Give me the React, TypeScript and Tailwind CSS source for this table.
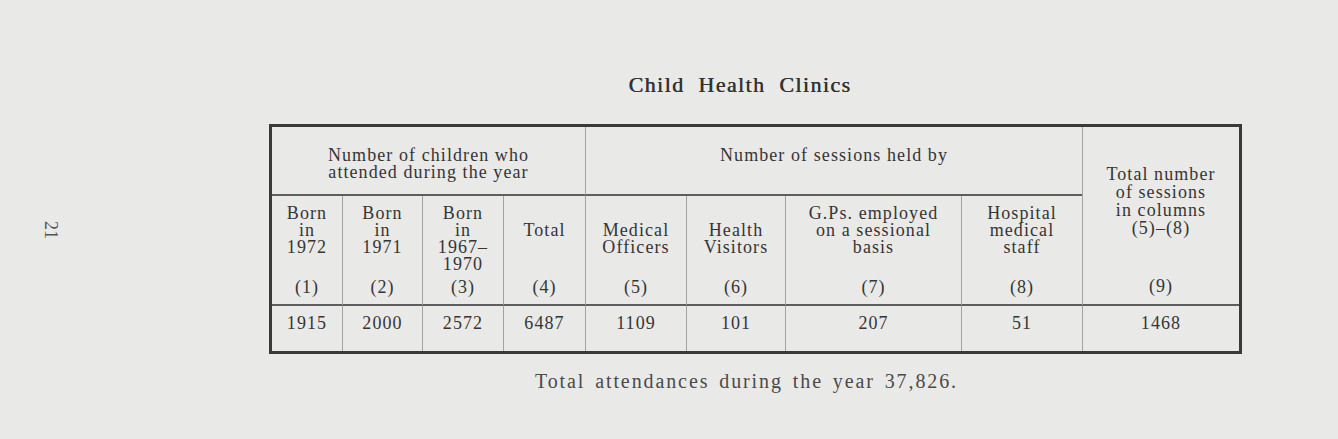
import React from "react";

const serif = { fontFamily: '"Liberation Serif", "Times New Roman", serif' };

function HeadCell({
  lines,
  label,
  offset = false,
  left = true,
}: {
  lines: string[];
  label: string;
  offset?: boolean;
  left?: boolean;
}) {
  return (
    <div
      className={`flex flex-col items-center pt-[9px] border-b-2 border-b-[#5e5e5e] ${
        left ? "border-l border-l-[#a3a3a1]" : ""
      }`}
    >
      <div className={`h-[74px] flex flex-col items-center ${offset ? "pt-[17px]" : ""}`}>
        {lines.map((l, i) => (
          <div key={i} className="whitespace-nowrap">
            {l}
          </div>
        ))}
      </div>
      <div>{label}</div>
    </div>
  );
}

function DataCell({ v, left = true }: { v: string; left?: boolean }) {
  return (
    <div
      className={`flex justify-center pt-[9px] ${left ? "border-l border-l-[#a3a3a1]" : ""}`}
    >
      {v}
    </div>
  );
}

export default function App() {
  return (
    <div
      className="w-[1338px] h-[439px] bg-[#e9e9e7] flex text-[#353535] overflow-hidden"
      style={serif}
    >
      <div className="w-[269px] shrink-0">
        <div className="ml-[41px] mt-[220px] w-[20px] h-[20px] flex items-center justify-center">
          <div className="rotate-90 text-[18px] leading-[18px] text-[#555]">21</div>
        </div>
      </div>
      <div className="w-[973px] shrink-0 flex flex-col">
        <div className="mt-[73px] h-[24px] pr-[31px] flex justify-center">
          <div className="text-[22px] leading-[24px] font-normal tracking-[1.4px] [word-spacing:7px] text-[#333] [text-shadow:0.35px_0_0_#333]">
            Child Health Clinics
          </div>
        </div>
        <div className="mt-[27px] border-[3px] border-[#3a3a3a] grid grid-cols-[70px_80px_81px_82px_101px_99px_176px_121px_157px] grid-rows-[69px_110px_45px] text-[18px] leading-[17px] tracking-[0.06em]">
          <div className="col-span-4 border-b-2 border-b-[#5e5e5e] flex flex-col items-center pt-[20px]">
            <div>Number of children who</div>
            <div>attended during the year</div>
          </div>
          <div className="col-span-4 border-b-2 border-b-[#5e5e5e] border-l border-l-[#a3a3a1] flex flex-col items-center pt-[20px]">
            <div>Number of sessions held by</div>
          </div>
          <div className="row-span-2 border-b-2 border-b-[#5e5e5e] border-l border-l-[#a3a3a1] flex flex-col items-center pt-[38px] leading-[18px]">
            <div>Total number</div>
            <div>of sessions</div>
            <div>in columns</div>
            <div>(5)–(8)</div>
            <div className="mt-[41px] leading-[17px]">(9)</div>
          </div>

          <HeadCell lines={["Born", "in", "1972"]} label="(1)" left={false} />
          <HeadCell lines={["Born", "in", "1971"]} label="(2)" />
          <HeadCell lines={["Born", "in", "1967–", "1970"]} label="(3)" />
          <HeadCell lines={["Total"]} label="(4)" offset />
          <HeadCell lines={["Medical", "Officers"]} label="(5)" offset />
          <HeadCell lines={["Health", "Visitors"]} label="(6)" offset />
          <HeadCell lines={["G.Ps. employed", "on a sessional", "basis"]} label="(7)" />
          <HeadCell lines={["Hospital", "medical", "staff"]} label="(8)" />

          <DataCell v="1915" left={false} />
          <DataCell v="2000" />
          <DataCell v="2572" />
          <DataCell v="6487" />
          <DataCell v="1109" />
          <DataCell v="101" />
          <DataCell v="207" />
          <DataCell v="51" />
          <DataCell v="1468" />
        </div>
        <div className="mt-[16px] pr-[18px] flex justify-center">
          <div className="text-[20px] leading-[22px] tracking-[1.9px] [word-spacing:3px] text-[#4a4a4a]">
            Total attendances during the year 37,826.
          </div>
        </div>
      </div>
    </div>
  );
}
